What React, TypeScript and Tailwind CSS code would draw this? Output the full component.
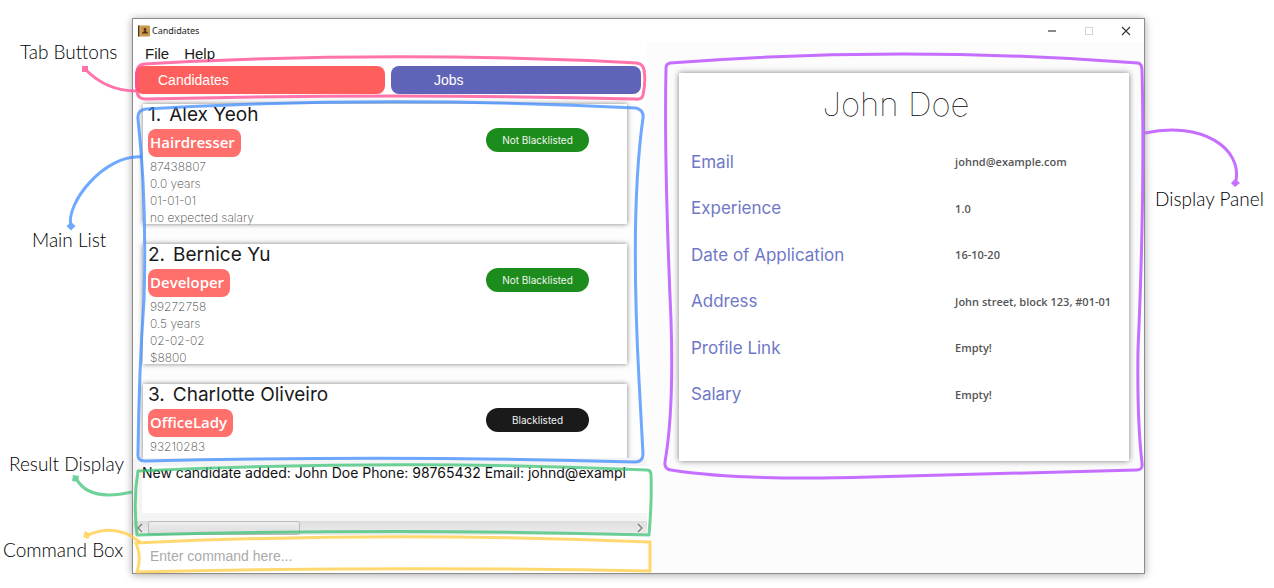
import React, { useState } from "react";

type Candidate = {
  name: string;
  tag: string;
  blacklisted: boolean;
  details: string[];
};

const candidates: Candidate[] = [
  { name: "Alex Yeoh", tag: "Hairdresser", blacklisted: false, details: ["87438807", "0.0 years", "01-01-01", "no expected salary"] },
  { name: "Bernice Yu", tag: "Developer", blacklisted: false, details: ["99272758", "0.5 years", "02-02-02", "$8800"] },
  { name: "Charlotte Oliveiro", tag: "OfficeLady", blacklisted: true, details: ["93210283"] },
];

const fields: [string, string][] = [
  ["Email", "johnd@example.com"],
  ["Experience", "1.0"],
  ["Date of Application", "16-10-20"],
  ["Address", "John street, block 123, #01-01"],
  ["Profile Link", "Empty!"],
  ["Salary", "Empty!"],
];

function BookIcon() {
  return (
    <svg width="12" height="12" viewBox="0 0 12 12" aria-hidden="true">
      <rect x="0" y="0.5" width="12" height="11" rx="1" fill="#c9964a" />
      <rect x="0" y="0.5" width="1.6" height="11" fill="#4a3626" />
      <rect x="1.6" y="0.5" width="0.8" height="11" fill="#e5bd79" />
      <circle cx="7" cy="4.2" r="1.3" fill="#4c3319" />
      <path d="M4.200 8.600V7.600L6.300 6V5h1.400v1L9.800 7.600v1Z" fill="#4c3319" />
    </svg>
  );
}

function TitleBar() {
  return (
    <header className="flex h-[23px] items-center bg-white pl-[5px] pr-3">
      <BookIcon />
      <h1 className="ml-[2px] flex-1 font-['Noto_Sans',sans-serif] text-[9px] text-[#222]">Candidates</h1>
      <div className="flex items-center gap-[25px]">
        <button aria-label="Minimize" className="flex w-3 justify-center">
          <svg width="10" height="10" viewBox="0 0 10 10"><path d="M1 5h8" stroke="#555" strokeWidth="1.4" /></svg>
        </button>
        <button aria-label="Maximize" disabled className="flex w-3 justify-center">
          <svg width="10" height="10" viewBox="0 0 10 10"><rect x="1.5" y="1.5" width="7" height="7" fill="none" stroke="#d4d4d4" /></svg>
        </button>
        <button aria-label="Close" className="flex w-3 justify-center">
          <svg width="10" height="10" viewBox="0 0 10 10"><path d="M1 1l8 8M9 1L1 9" stroke="#333" strokeWidth="1.1" /></svg>
        </button>
      </div>
    </header>
  );
}

function CandidateCard({ candidate, index }: { candidate: Candidate; index: number }) {
  return (
    <li className="flex h-[120px] shrink-0 items-start justify-between bg-white pl-[5px] pr-[38px] shadow-[0_0_5px_rgba(0,0,0,0.5)]">
      <div className="flex flex-col items-start">
        <h2 className="flex h-[25px] gap-[8px] font-['Inter',sans-serif] text-[19px] leading-[22px] text-[#1a1a1a]">
          <span>{index}.</span>
          <span>{candidate.name}</span>
        </h2>
        <span className="flex h-[28px] items-center rounded-[8px] bg-[#ff6f6b] pb-[2px] pl-[2px] pr-[6px] font-['Open_Sans',sans-serif] text-[15px] font-semibold text-white">
          {candidate.tag}
        </span>
        <div className="pl-[2px] pt-px font-['Inter',sans-serif] text-[12px] font-extralight leading-[17px] text-[#444]">
          {candidate.details.map((line) => (
            <p key={line}>{line}</p>
          ))}
        </div>
      </div>
      <span
        className={
          "mt-6 flex h-6 w-[103px] items-center justify-center rounded-full font-['Inter',sans-serif] text-[10px] text-[#f4f4f4] " +
          (candidate.blacklisted ? "bg-[#1a1a1a]" : "bg-[#1c8c1c]")
        }
      >
        {candidate.blacklisted ? "Blacklisted" : "Not Blacklisted"}
      </span>
    </li>
  );
}

function ResultDisplay() {
  return (
    <section aria-label="Result Display" className="bg-[#f4f4f4] pt-[8px]">
      <div className="ml-[9px] h-[47px] whitespace-nowrap bg-white font-['Inter',sans-serif] text-[14px] leading-[14px] text-[#111]">
        <p>New candidate added: John Doe Phone: 98765432 Email: johnd@exampl</p>
      </div>
      <div className="mt-2 flex h-[14px] items-center justify-between bg-gradient-to-b from-[#dedede] to-[#ededed] px-1">
        <svg width="6" height="10" viewBox="0 0 6 10"><path d="M5 1L1 5l4 4" fill="none" stroke="#777" strokeWidth="1.2" /></svg>
        <div className="ml-[5px] flex h-full flex-1">
          <div className="h-full w-[31%] rounded-[2px] border border-[#bcbcbc] bg-gradient-to-b from-[#eee] to-[#dcdcdc]" />
        </div>
        <svg width="6" height="10" viewBox="0 0 6 10"><path d="M1 1l4 4-4 4" fill="none" stroke="#777" strokeWidth="1.2" /></svg>
      </div>
    </section>
  );
}

function DisplayPanel() {
  return (
    <section className="bg-[#fcfcfc] pb-8 pl-[32px] pr-[15px] pt-[31px]">
      <div className="h-[388px] bg-white px-3 shadow-[0_0_6px_rgba(0,0,0,0.5)]">
        <h2 className="pb-4 pt-3 pr-4 text-center font-['Inter',sans-serif] text-[33px] font-thin leading-[38px] text-black">John Doe</h2>
        <dl className="grid h-[279px] auto-rows-fr">
          {fields.map(([label, value]) => (
            <div key={label} className="flex items-center">
              <dt className="w-[62%] font-['Inter',sans-serif] text-[17px] text-[#6f78c6]">{label}</dt>
              <dd className="flex-1 whitespace-nowrap font-['Open_Sans',sans-serif] text-[11px] font-semibold text-[#555]">{value}</dd>
            </div>
          ))}
        </dl>
      </div>
    </section>
  );
}

function Annotations() {
  return (
    <svg className="pointer-events-none absolute inset-0 h-full w-full" viewBox="0 0 1274 588" preserveAspectRatio="none" fill="none" strokeWidth="3" aria-hidden="true">
      <g stroke="#ff4d94" strokeOpacity="0.78">
        <path d="M144 64Q390 50 637 63Q643 64 644 70Q646 82 643 95Q642 100 635 99Q400 93 145 99Q137 99 137 90V72Q137 65 144 64Z" />
        <path d="M86 70Q107 91 136 91" />
      </g>
      <path d="M82 66h6v6h-6z" fill="#ff71a9" />
      <g stroke="#3f8cff" strokeOpacity="0.75">
        <path d="M146 109Q380 95 636 108Q644 110 643 118Q630 210 639 380L643 454Q643 462 635 462Q400 455 145 461Q137 461 138 453Q139 370 144 300Q147 200 138 119Q137 110 146 109Z" />
        <path d="M142 157C104 154 65 204 71 226" />
      </g>
      <path d="M71 222l4.500 4-4.500 4.500-4.500-4.500z" fill="#6fa9ff" />
      <g stroke="#37c172" strokeOpacity="0.72">
        <path d="M138 471Q400 459 647 470Q651 470 651 475Q652 500 649 535Q400 528 137 535Q133 500 138 471Z" strokeLinejoin="round" />
        <path d="M76 478Q88 502 132 492" />
      </g>
      <path d="M73 475l6 1-1 6-6-1z" fill="#6fd49a" />
      <g stroke="#ffc933" strokeOpacity="0.7">
        <path d="M136 543Q390 531 650 542V571Q390 566 137 572Q142 557 136 543Z" />
        <path d="M88 535Q116 523 140 542" />
      </g>
      <path d="M85 531l6 3-3 5-5-2z" fill="#ffd970" />
      <g stroke="#c56eff">
        <path d="M670 63Q900 45 1138 63Q1142 64 1142 70Q1145 190 1138 350Q1137 420 1142 463Q1143 470 1137 470L870 477Q740 481 671 470Q664 469 665 462Q674 410 671 320Q664 160 666 68Q666 64 670 63Z" />
        <path d="M1145 133C1202 121 1242 148 1236 181" />
      </g>
      <path d="M1235 179l5 4-5 4-4-4z" fill="#c56eff" />
    </svg>
  );
}

export default function App() {
  const [command, setCommand] = useState("");
  return (
    <main className="relative flex min-h-[588px] w-full items-start bg-white">
      <aside className="flex w-[132px] shrink-0 flex-col font-['Lato',sans-serif] text-[19px] font-light leading-6 text-black">
        <p className="pl-5 pt-[40px]">Tab Buttons</p>
        <p className="pl-8 pt-[164px]">Main List</p>
        <p className="pl-[9px] pt-[200px]">Result Display</p>
        <p className="whitespace-nowrap pl-[3px] pt-[62px]">Command Box</p>
      </aside>

      <div className="mt-[18px] min-w-0 flex-1 border border-[#8c8c8c] bg-white shadow-[0_1px_8px_rgba(0,0,0,0.35)]">
        <TitleBar />
        <div className="grid grid-cols-[514fr_497fr]">
          <div className="min-w-0">
            <nav className="flex h-[24px] items-center gap-[15px] pl-3 font-['Liberation_Sans',sans-serif] text-[15px] leading-[24px] text-[#1a1a1a]">
              <button>File</button>
              <button>Help</button>
            </nav>
            <div role="tablist" className="grid h-[28px] grid-cols-2 gap-[6px] pl-[2px] pr-[6px] font-['Liberation_Sans',sans-serif] text-[14px] text-white">
              <button role="tab" aria-selected="true" className="rounded-[8px] bg-[#ff5f5c] pl-[23px] text-left">Candidates</button>
              <button role="tab" aria-selected="false" className="rounded-[8px] bg-[#5f64b8] pl-[43px] text-left">Jobs</button>
            </div>
            <ul className="flex h-[364px] flex-col gap-5 overflow-hidden bg-[#fdfdfd] pl-[10px] pr-[20px] pt-[10px]">
              {candidates.map((candidate, i) => (
                <CandidateCard key={candidate.name} candidate={candidate} index={i + 1} />
              ))}
            </ul>
            <ResultDisplay />
            <div className="mt-[4px] h-[34px] px-1">
              <input
                aria-label="Command Box"
                value={command}
                onChange={(event) => setCommand(event.target.value)}
                placeholder="Enter command here..."
                className="h-full w-full bg-white px-[13px] font-['Liberation_Sans',sans-serif] text-[14px] outline-none placeholder:text-[#aaa]"
              />
            </div>
          </div>
          <DisplayPanel />
        </div>
      </div>

      <aside className="w-[129px] shrink-0 whitespace-nowrap pl-[10px] pt-[187px] font-['Lato',sans-serif] text-[19px] font-light leading-6 text-black">
        <p>Display Panel</p>
      </aside>
      <Annotations />
    </main>
  );
}
